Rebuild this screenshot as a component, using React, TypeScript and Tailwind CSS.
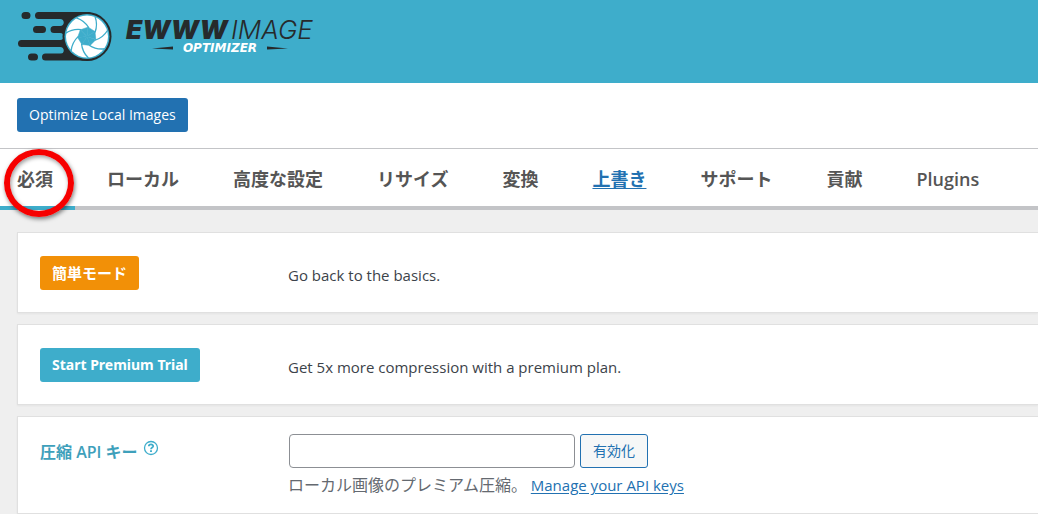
import { useState } from "react";
import type { ReactNode } from "react";

const tabs = ["必須", "ローカル", "高度な設定", "リサイズ", "変換", "上書き", "サポート", "貢献", "Plugins"];

const Logo = () => (
  <svg className="block w-[300px] h-[54px]" viewBox="16 8 300 54" role="img" aria-label="EWWW Image Optimizer">
    <g stroke="#262a2c" strokeWidth="7" strokeLinecap="round">
      <path d="M25 15.5h2M38.500 15.500h50M36.500 29.500h6M54 29.500h20M21.500 43.500h50M31.500 57h3M45.500 57h43" />
    </g>
    <path d="M61 19h26v35H60c5 0 5-7 0-7V40c5 0 5-7 0-7V26c5 0 5-7 0-7Z" fill="#262a2c" />
    <circle cx="87" cy="36.500" r="24.500" fill="#262a2c" />
    <circle cx="87" cy="36.500" r="22.500" fill="#3eadcb" />
    <circle cx="87" cy="36.500" r="21" fill="#fff" />
    {[0, 51.4, 102.9, 154.3, 205.7, 257.1, 308.6].map((deg) => (
      <g key={deg} transform={`translate(87 36.5) rotate(${deg})`}>
        <path d="M0 0L8 -5L8.900 3.100Z" fill="#3eadcb" stroke="#3eadcb" strokeWidth="0.500" />
        <path d="M8 -20Q11 -12 8 -4" fill="none" stroke="#3eadcb" strokeWidth="1.300" />
      </g>
    ))}
    <g fontStyle="italic">
      <text x="126" y="39" fontSize="26" fontWeight="900" fill="#262a2c" fontFamily="Inter, sans-serif">EWWW</text>
      <text x="231" y="39" fontSize="26" fontWeight="300" fill="#262a2c" fontFamily="Inter, sans-serif">IMAGE</text>
      <text x="220" y="52" fontSize="12" fontWeight="700" fill="#fff" textAnchor="middle" fontFamily="DejaVu Sans, sans-serif">OPTIMIZER</text>
    </g>
    <path d="M152 48.500l21-2v3ZM288 48.500l-21-2v3Z" fill="#262a2c" />
  </svg>
);

const Row = ({ label, children }: { label: ReactNode; children: ReactNode }) => (
  <section className="flex bg-white border border-r-0 border-[#e0e0e0] shadow-xs pl-[22px]">
    <div className="w-[248px] shrink-0">{label}</div>
    <div className="min-w-0 flex-1">{children}</div>
  </section>
);

export default function App() {
  const [active, setActive] = useState("必須");
  const [apiKey, setApiKey] = useState("");

  return (
    <div className="bg-[#efefef] text-[#3c434a] text-[15px] leading-5 font-['Open_Sans','Noto_Sans_CJK_JP',sans-serif]">
      <header className="bg-[#3eadcb] h-[83px] pt-2 pl-4">
        <Logo />
      </header>

      <div className="bg-white border-b border-[#c3c4c7] py-[15px] px-[17px] h-[66px]">
        <button className="h-[34px] px-3 rounded-[3px] bg-[#2271b1] text-white text-sm">Optimize Local Images</button>
      </div>

      <nav className="relative bg-white">
        <ul className="flex gap-[10px] border-b-4 border-[#c3c4c7] text-lg leading-6 font-semibold whitespace-nowrap">
          {tabs.map((tab, i) => (
            <li key={tab}>
              <button
                onClick={() => setActive(tab)}
                className={`-mb-1 h-[61px] pt-0.5 border-b-4 pr-[22px] ${i === 0 ? "pl-[17px]" : "pl-[22px]"} ${
                  active === tab ? "border-[#3eadcb]" : "border-transparent"
                } ${tab === "上書き" ? "text-[#2271b1] underline underline-offset-2" : "text-[#555]"}`}
              >
                {tab}
              </button>
            </li>
          ))}
        </ul>
        {/* marker around the first tab */}
        <div className="absolute left-1 top-0 w-[70px] h-[68px] rounded-[50%] border-6 border-[#f60000] shadow-[1px_2px_4px_rgba(0,0,0,0.5),inset_1px_2px_4px_rgba(0,0,0,0.4)] pointer-events-none" />
      </nav>

      <main className="pt-[22px] pl-[17px] flex flex-col gap-[11px]">
        <Row
          label={<button className="mt-[23px] mb-[22px] block h-[34px] px-3 rounded-[3px] bg-[#f29007] text-white text-[15px] font-bold">簡単モード</button>}
        >
          <p className="pt-8">Go back to the basics.</p>
        </Row>
        <Row
          label={<button className="mt-[23px] mb-[22px] block h-[34px] px-3 rounded-[3px] bg-[#3eadcb] text-white text-sm font-bold font-['Noto_Sans',sans-serif]">Start Premium Trial</button>}
        >
          <p className="pt-8">Get 5x more compression with a premium plan.</p>
        </Row>
        <Row
          label={
            <div className="flex gap-[5px] pt-[25px] text-base leading-5 text-[#3ea0bb] font-semibold">
              <label htmlFor="api-key">圧縮 API キー</label>
              <a href="#help" aria-label="Help" className="-mt-0.5">
                <svg className="w-4 h-4" viewBox="0 0 16 16" fill="none" stroke="#3eadcb">
                  <circle cx="8" cy="8" r="6.500" strokeWidth="1.300" />
                  <path d="M5.800 6.300C5.900 3.800 10.300 3.900 10.200 6.300C10.100 7.700 8 7.600 8 9.300" strokeWidth="1.800" />
                  <path d="M8 10.300v1.800" strokeWidth="1.900" />
                </svg>
              </a>
            </div>
          }
        >
          <div className="flex gap-[5px] pt-[17px] pl-px">
            <input
              id="api-key"
              type="text"
              value={apiKey}
              onChange={(e) => setApiKey(e.target.value)}
              className="w-[286px] h-[34px] px-2 border border-[#8c8f94] rounded bg-white"
            />
            <button className="h-[34px] px-3 border border-[#2271b1] rounded-[3px] bg-[#f6f7f7] text-[#2271b1] text-sm">有効化</button>
          </div>
          <p className="pt-[7px] pb-[18px] text-[#646970]">
            <span className="text-base leading-5">ローカル画像のプレミアム圧縮。</span>{" "}
            <a href="#keys" className="text-[#2271b1] underline underline-offset-2">Manage your API keys</a>
          </p>
        </Row>
      </main>
    </div>
  );
}
